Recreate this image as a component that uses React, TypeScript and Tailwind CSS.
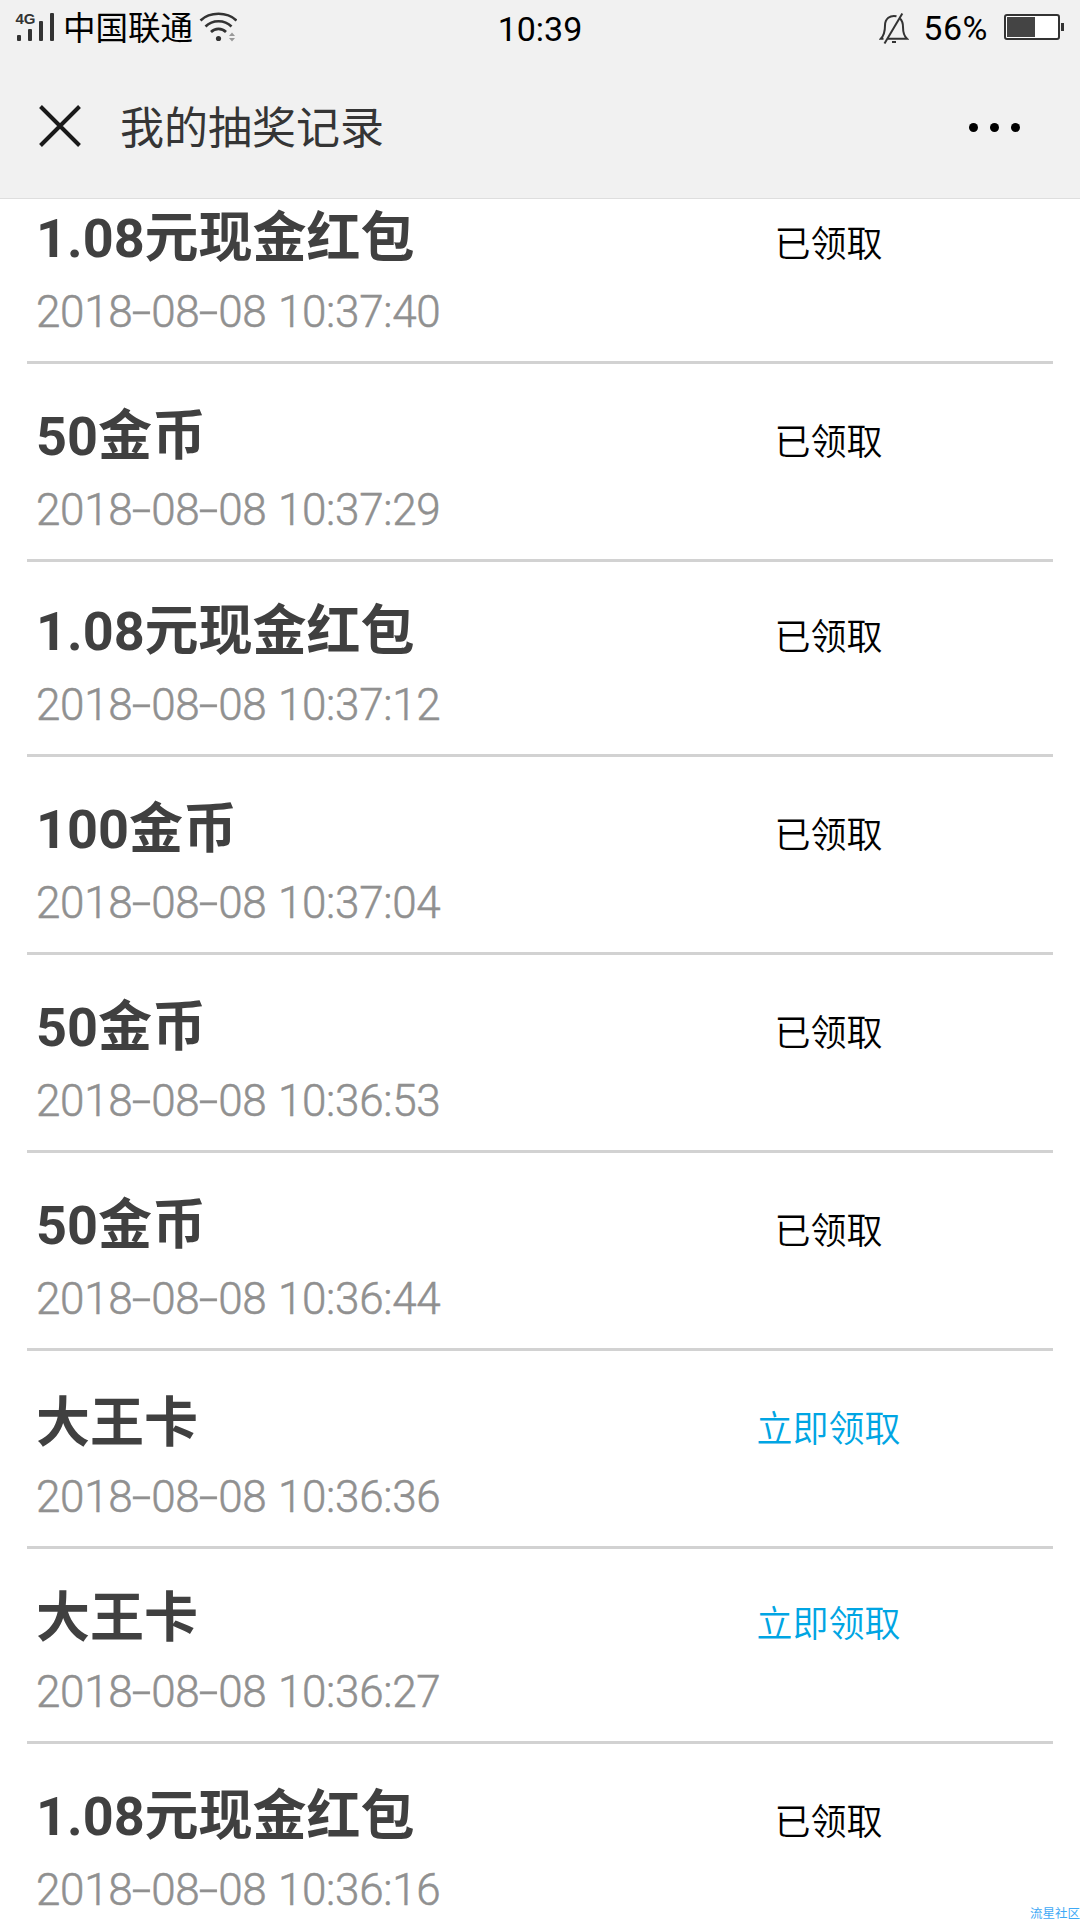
import React from 'react';

interface DrawRecord {
  prize: string;
  time: string;
  claimed: boolean;
  height: string;
}

const records: DrawRecord[] = [
  { prize: '1.08元现金红包', time: '2018-08-08 10:37:40', claimed: true, height: 'h-[165px]' },
  { prize: '50金币', time: '2018-08-08 10:37:29', claimed: true, height: 'h-[198px]' },
  { prize: '1.08元现金红包', time: '2018-08-08 10:37:12', claimed: true, height: 'h-[195px]' },
  { prize: '100金币', time: '2018-08-08 10:37:04', claimed: true, height: 'h-[198px]' },
  { prize: '50金币', time: '2018-08-08 10:36:53', claimed: true, height: 'h-[198px]' },
  { prize: '50金币', time: '2018-08-08 10:36:44', claimed: true, height: 'h-[198px]' },
  { prize: '大王卡', time: '2018-08-08 10:36:36', claimed: false, height: 'h-[198px]' },
  { prize: '大王卡', time: '2018-08-08 10:36:27', claimed: false, height: 'h-[195px]' },
  { prize: '1.08元现金红包', time: '2018-08-08 10:36:16', claimed: true, height: 'h-[198px]' }
];

const SignalIcon = () => (
  <svg className="w-[40px] h-[30px] overflow-visible" viewBox="15 12 40 30" fill="#333">
    <text x="15.5" y="24" fontSize="15" fontWeight="700" fontFamily="Liberation Sans, sans-serif">4G</text>
    <rect x="17" y="35" width="4" height="6" rx="1" />
    <rect x="28" y="29" width="4" height="12" rx="1" />
    <rect x="39" y="21" width="4" height="20" rx="1" />
    <rect x="50" y="13" width="4" height="28" rx="1" />
  </svg>
);

const WifiIcon = () => (
  <svg className="w-[38px] h-[30px]" viewBox="199 12 38 30" fill="none" stroke="#333" strokeWidth="2.6">
    <path d="M200.5 20.5C210 11.5 227 11.5 236.5 20.5" />
    <path d="M205.5 26.5C212.5 19.5 224.5 19.5 231.5 26.5" />
    <path d="M211 32C215 27.8 222 27.8 226 32" />
    <circle cx="218.5" cy="38.5" r="2.6" fill="#333" stroke="none" />
    <path d="M229 36l3-3.5 3 3.5zM229 38l3 3.5 3-3.5z" fill="#999" stroke="none" />
  </svg>
);

const MutedBellIcon = () => (
  <svg className="w-[30px] h-[32px]" viewBox="878 11 30 32" fill="none" stroke="#333" strokeWidth="2">
    <path d="M895.5 15.2C889 13.7 884 18 884 24.5C884 31 883 34.5 879.8 37.8H882.5" />
    <path d="M899 17.5C901.5 20 902 23 902 26C902 32 903 35 906 37.8H887" />
    <path d="M901.3 12.5L883.5 42.5" />
    <path d="M891 41h4" />
  </svg>
);

const BatteryIcon = () => (
  <svg className="w-[61px] h-[28px] mt-px" viewBox="1003 13 61 28">
    <rect x="1005" y="15" width="54" height="24" rx="2" fill="#fff" stroke="#333" strokeWidth="2" />
    <rect x="1007" y="17" width="28" height="20" fill="#444" />
    <rect x="1061" y="23" width="3" height="8" fill="#333" />
  </svg>
);

const StatusBar = () => (
  <div className="h-[56px] flex items-start justify-between pl-[15px] pr-[16px] pt-[12px] text-black leading-[30px]">
    <div className="w-[340px] flex">
      <SignalIcon />
      <span className="ml-[8px] mt-[2px] text-[32.5px] w-[136px] whitespace-nowrap">中国联通</span>
      <WifiIcon />
    </div>
    <span className="mt-[2px] ml-px text-[34px]">10:39</span>
    <div className="w-[340px] flex justify-end">
      <MutedBellIcon />
      <span className="ml-[14px] mr-[15px] mt-px text-[34px] tracking-[0.5px]">56%</span>
      <BatteryIcon />
    </div>
  </div>
);

const TitleBar = () => (
  <div className="h-[143px] flex items-start border-b border-[#dedede] pl-[39px] pt-[49px]">
    <svg className="w-[42px] h-[42px]" viewBox="0 0 42 42" stroke="#1a1a1a" strokeWidth="4">
      <path d="M1.5 1.5L40.5 40.5M40.5 1.5L1.5 40.5" />
    </svg>
    <h1 className="ml-[39px] mt-[2px] text-[44px] leading-[44px] text-[#353535]">我的抽奖记录</h1>
    <div className="ml-auto mr-[60px] mt-[18px] flex gap-[12px]">
      <span className="size-[9px] rounded-full bg-black"></span>
      <span className="size-[9px] rounded-full bg-black"></span>
      <span className="size-[9px] rounded-full bg-black"></span>
    </div>
  </div>
);

const RecordTime: React.FC<{ time: string }> = ({ time }) => (
  <p className="text-[44px] leading-[50px] font-light tracking-[-0.3px] [word-spacing:1px] [-webkit-text-stroke:0.5px_#909090] whitespace-nowrap text-[#909090]">
    {time.split('-').map((part, index) => (
      <React.Fragment key={index}>
        {index > 0 && <span className="inline-block w-[18.8px] text-center scale-x-160">-</span>}
        {part}
      </React.Fragment>
    ))}
  </p>
);

const RecordRow: React.FC<{ record: DrawRecord }> = ({ record }) => (
  <li className={`${record.height} shrink-0 flex items-end justify-between border-b-[3px] border-[#d2d2d2] pl-[9px]`}>
    <div className="pb-[24px]">
      <p className="mb-[12px] text-[54px] leading-[72px] font-bold text-[#404040]">{record.prize}</p>
      <RecordTime time={record.time} />
    </div>
    <span className={`w-[449px] text-center text-[36px] leading-[50px] mb-[91px] font-[350] ${record.claimed ? 'text-black' : 'text-[#00a5e3]'}`}>
      {record.claimed ? '已领取' : '立即领取'}
    </span>
  </li>
);

export default function App() {
  return (
    <div className="relative w-[1080px] h-[1920px] overflow-hidden flex flex-col bg-white font-['Roboto','Noto_Sans_CJK_SC',sans-serif]">
      <header className="shrink-0 bg-[#f1f1f1]">
        <StatusBar />
        <TitleBar />
      </header>
      <ul className="px-[27px] flex flex-col">
        {records.map((record) => (
          <RecordRow key={record.time} record={record} />
        ))}
      </ul>
      <span className="absolute right-0 bottom-0 text-[12.5px] leading-[13px] text-[#3fa9f5]">流星社区</span>
    </div>
  );
}
